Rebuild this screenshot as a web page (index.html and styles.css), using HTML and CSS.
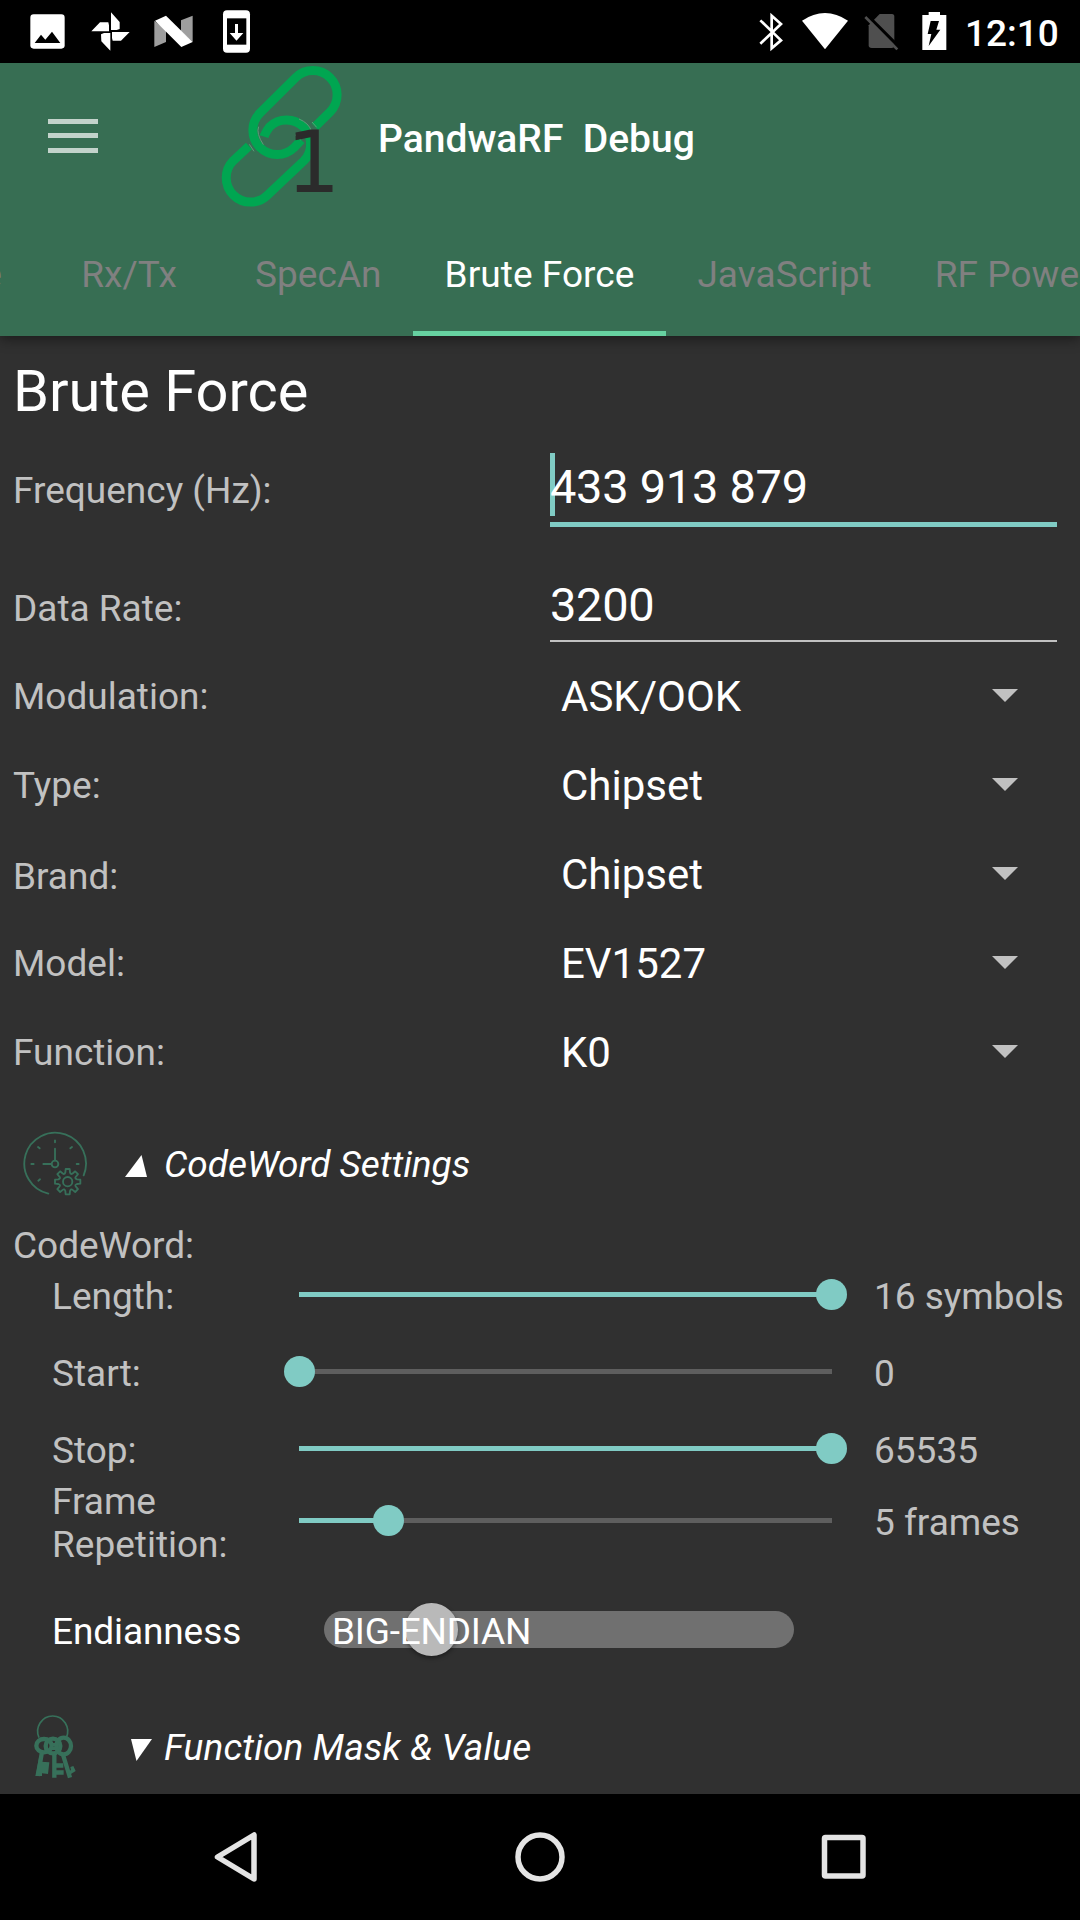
FILE: index.html
```html
<!DOCTYPE html>
<html lang="en">
<head>
<meta charset="utf-8">
<title>PandwaRF Debug</title>
<link rel="stylesheet" href="styles.css">
</head>
<body>
<div class="screen">
  <div class="status-bar">
    <div class="status-left">
      <svg class="notif" viewBox="48 0 189 189"><rect x="91" y="43" width="103" height="103" rx="10" fill="#fff"/><path d="M104 129L123 104L136 119L156 95L181 129Z"/></svg>
      <svg class="notif" viewBox="237 0 189 189"><path fill="#fff" d="M333 37L359 66V87L350 90H333ZM274 94L300 67H325L327 76V94ZM389 96L363 122H338L336 114V96ZM331 152L304 124L303 103L312 99H331Z"/></svg>
      <svg class="notif" viewBox="426 0 189 189"><path fill="#9e9e9e" d="M463 62V141L498 126V90ZM578 47L543 61V94L578 126Z"/><path fill="#fff" d="M465 62L498 47L578 126L544 141Z"/></svg>
      <svg class="notif" viewBox="615 0 189 189"><rect x="669" y="31" width="81" height="127" rx="12" fill="#fff"/><path d="M681 55H739V134H681Z"/><path fill="#fff" d="M705 72H714V99H730L709.500 122L689 99H705Z"/></svg>
    </div>
    <div class="status-right">
      <svg class="sys" viewBox="71 0 163 189"><path fill="none" stroke="#fff" stroke-width="8" d="M120 61L182 121L154 145V47L182 72L120 131"/></svg>
      <svg class="sys" viewBox="234 0 163 189"><path fill="#fff" d="M246 62Q315 16 384 62L315 148Z"/></svg>
      <svg class="sys" viewBox="397 0 163 189"><path fill="#4f4f4f" d="M480 42H517Q524 42 524 50V136Q524 144 516 144H456Q447 144 447 136V76Z"/><path stroke="#000" stroke-width="10" d="M440 43L540 143"/><path stroke="#4f4f4f" stroke-width="8" d="M437 51L533 148"/></svg>
      <svg class="sys" viewBox="560 0 163 189"><path fill="#fff" d="M606 45H625V36H659V45H678V150H606Z"/><path d="M631 63H656L648 89H660L625 138L633 102H622Z"/></svg>
      <span class="clock">12:10</span>
    </div>
  </div>

  <header class="app-bar">
    <div class="toolbar">
      <div class="menu"><i></i><i></i><i></i></div>
      <svg class="link" viewBox="660 189 378 441">
        <g fill="none" stroke="#00a651" stroke-width="27">
          <path d="M945 380L990 336A72.500 72.500 0 0 0 887 233L780 339A72.500 72.500 0 0 0 883 442L904 420"/>
          <path d="M792 410Q796 397 809 380A72.500 72.500 0 0 1 912 482L803 585A72.500 72.500 0 0 1 700 482L747 438"/>
        </g>
        <g fill="none" stroke="#5f9a78" stroke-width="3">
          <path d="M776 380Q768 400 790 434M897 357Q926 369 934 392M748 433L762 454M936 366L950 382M886 405L902 420"/>
        </g>
        <text class="link-num" x="859" y="575">1</text>
      </svg>
      <h1 class="app-title">PandwaRF  Debug</h1>
    </div>
    <nav class="tabs">
      <span class="tab tab-cut">e</span>
      <span class="tab">Rx/Tx</span>
      <span class="tab">SpecAn</span>
      <span class="tab active">Brute Force</span>
      <span class="tab">JavaScript</span>
      <span class="tab">RF Power</span>
    </nav>
  </header>

  <main class="content">
    <h2 class="page-title">Brute Force</h2>
    <div class="row row-freq"><span class="label">Frequency (Hz):</span><div class="field focused">433 913 879<i class="caret"></i></div></div>
    <div class="row row-rate"><span class="label">Data Rate:</span><div class="field">3200</div></div>
    <div class="row"><span class="label">Modulation:</span><div class="spinner">ASK/OOK<svg class="arrow" viewBox="0 0 26 13"><path d="M0 0H26L13 13Z"/></svg></div></div>
    <div class="row"><span class="label">Type:</span><div class="spinner">Chipset<svg class="arrow" viewBox="0 0 26 13"><path d="M0 0H26L13 13Z"/></svg></div></div>
    <div class="row"><span class="label label-low">Brand:</span><div class="spinner">Chipset<svg class="arrow" viewBox="0 0 26 13"><path d="M0 0H26L13 13Z"/></svg></div></div>
    <div class="row"><span class="label">Model:</span><div class="spinner">EV1527<svg class="arrow" viewBox="0 0 26 13"><path d="M0 0H26L13 13Z"/></svg></div></div>
    <div class="row"><span class="label">Function:</span><div class="spinner">K0<svg class="arrow" viewBox="0 0 26 13"><path d="M0 0H26L13 13Z"/></svg></div></div>

    <div class="section">
      <svg class="section-icon" viewBox="60 57 210 201">
        <g fill="none" stroke="#37705a" stroke-width="5.500" stroke-linecap="round" stroke-linejoin="round">
          <path d="M251 193A92.500 92.500 0 1 0 145 248"/>
          <circle cx="165" cy="159" r="10"/>
          <path d="M165 148V113M154 159H130M165 88V94M94 159H101M230 159H236M114 108L119 112M216 108L211 112M115 209L120 205"/>
          <g transform="translate(203 212)">
            <circle r="14"/>
            <path d="M28 -7L38 -6V6L28 7Q20 10 24.700 14.800L31 22.600L22.600 31L14.800 24.700Q10 20 7 28L6 38H-6L-7 28Q-10 20 -14.800 24.700L-22.600 31L-31 22.600L-24.700 14.800Q-20 10 -28 7L-38 6V-6L-28 -7Q-20 -10 -24.700 -14.800L-31 -22.600L-22.600 -31L-14.800 -24.700Q-10 -20 -7 -28L-6 -38H6L7 -28Q10 -20 14.800 -24.700L22.600 -31L31 -22.600L24.700 -14.800Q20 -10 28 -7Z"/>
          </g>
        </g>
      </svg>
      <svg class="tri tri-up" viewBox="0 0 22 22"><path d="M0 22H22L16.500 0Z"/></svg>
      <span class="section-name">CodeWord Settings</span>
    </div>

    <div class="sub-title">CodeWord:</div>
    <div class="slide-row"><span>Length:</span><div class="slider"><div class="fill" style="width:100%"></div></div><span class="value">16 symbols</span></div>
    <div class="slide-row"><span>Start:</span><div class="slider"><div class="fill" style="width:0%"></div></div><span class="value">0</span></div>
    <div class="slide-row"><span>Stop:</span><div class="slider"><div class="fill" style="width:100%"></div></div><span class="value">65535</span></div>
    <div class="slide-row slide-frame"><span>Frame<br>Repetition:</span><div class="slider"><div class="fill" style="width:16.8%"></div></div><span class="value">5 frames</span></div>
    <div class="endian-row"><span>Endianness</span><div class="switch"><i class="knob"></i><span class="switch-text">BIG-ENDIAN</span></div></div>

    <div class="section section-last">
      <svg class="section-icon" viewBox="0 36 210 201">
        <g fill="none" stroke="#37705a">
          <path stroke-width="5" d="M57 110A45 46 0 1 1 139 110"/>
          <g stroke-width="13">
            <ellipse cx="72" cy="134" rx="23" ry="20"/>
            <circle cx="99" cy="135" r="22"/>
            <ellipse cx="131" cy="135" rx="22" ry="25"/>
            <path d="M66 152L54 225M103 158V230M128 158L150 230" />
          </g>
          <path stroke-width="10" d="M90 131H111M93 142H108"/>
        </g>
        <path fill="#37705a" d="M62 182L88 184L84 219L66 217V225H46L58 165ZM108 187H130V200H108ZM108 208H131V221H108ZM144 212L153 207L151 198L160 195L167 210L148 222Z"/>
      </svg>
      <svg class="tri tri-down" viewBox="0 0 21 22"><path d="M0 0H21L5.500 22Z"/></svg>
      <span class="section-name">Function Mask &amp; Value</span>
    </div>
  </main>

  <footer class="nav-bar">
    <svg viewBox="0 0 60 60"><path d="M48 8V52L11.500 30Z"/></svg>
    <svg viewBox="0 0 60 60"><circle cx="30" cy="30" r="22"/></svg>
    <svg viewBox="0 0 60 60"><rect x="10.500" y="10.500" width="38.500" height="38.500" rx="1"/></svg>
  </footer>
</div>
</body>
</html>
```
FILE: styles.css
```css
* { box-sizing: border-box; }
body { margin: 0; background: #303030; }
.screen {
  width: 1080px;
  height: 1920px;
  display: flex;
  flex-direction: column;
  overflow: hidden;
  font-family: Roboto, sans-serif;
  font-size: 37px;
  color: #fff;
}
svg { display: block; flex: none; }
h1, h2 { margin: 0; font-weight: 400; }

.status-bar {
  height: 63px;
  flex: none;
  background: #000;
  display: flex;
  justify-content: space-between;
  padding: 0 21px 0 16px;
}
.status-left, .status-right { display: flex; }
.notif { width: 63px; height: 63px; }
.sys { width: 54.33px; height: 63px; }
.clock { width: 98px; padding-left: 4px; line-height: 68px; font-weight: 500; white-space: nowrap; }

.app-bar {
  height: 273px;
  flex: none;
  background: #376e53;
  box-shadow: 0 3px 12px rgba(0, 0, 0, .45);
  z-index: 1;
}
.toolbar { height: 147px; display: flex; }
.menu { flex: none; width: 220px; padding: 56px 0 0 48px; display: flex; flex-direction: column; gap: 9.3px; }
.menu i { width: 50px; height: 5px; background: #c3d3cb; }
.link { width: 126px; height: 147px; }
.link-num { font-family: "DejaVu Sans", sans-serif; font-size: 255px; fill: #2b2b2b; }
.app-title { margin-left: 32px; line-height: 153px; font-size: 39px; font-weight: 500; white-space: pre; }

.tabs { height: 126px; display: flex; overflow: hidden; }
.tab {
  flex: none;
  min-width: 189px;
  padding: 0 31.5px;
  text-align: center;
  line-height: 130px;
  letter-spacing: .05px;
  color: #808080;
  white-space: nowrap;
}
.tab-cut { min-width: 0; width: 34.5px; padding: 0 32.500px 0 0; direction: rtl; overflow: hidden; }
.tab.active { color: #fff; border-bottom: 5px solid #66d1a0; }

.content { flex: 1; color: #c1c1c1; }
.page-title { height: 110px; line-height: 111px; padding-left: 13px; font-size: 57.75px; color: #fff; }
.row { height: 89px; display: grid; grid-template-columns: 550px 507px; grid-template-rows: 89px; }
.row-freq { height: 118px; }
.row-rate { height: 88px; }
.label { padding-left: 13px; line-height: 89px; }
.label-low { padding-top: 2px; }
.field {
  position: relative;
  height: 78px;
  line-height: 82px;
  border-bottom: 2px solid #c1c1c1;
  font-size: 47px;
  letter-spacing: -.3px;
  color: #fff;
}
.field.focused { height: 81px; border-bottom: 5px solid #80cbc4; }
.caret { position: absolute; left: 0; top: 7px; width: 5px; height: 63px; background: #80cbc4; z-index: -1; }
.spinner {
  display: flex;
  align-items: center;
  justify-content: space-between;
  padding: 0 39.5px 0 11px;
  line-height: 89px;
  font-size: 42px;
  color: #fff;
}
.arrow { width: 26px; height: 13px; fill: #c1c1c1; margin-bottom: 2px; }

.section { height: 135px; display: flex; align-items: center; color: #fff; font-style: italic; padding-left: 20px; letter-spacing: -.05px; }
.section-icon { width: 70px; height: 67px; margin-bottom: 3px; }
.tri { fill: #fff; }
.tri-up { width: 22px; height: 22px; margin: 3px 17px 0 35px; }
.tri-down { width: 21px; height: 22px; margin: 4px 12px 0 41px; }
.section-last { height: 87px; padding-bottom: 6px; letter-spacing: .12px; }

.sub-title { height: 26px; line-height: 27px; padding-left: 13px; }
.slide-row {
  height: 77px;
  display: grid;
  grid-template-columns: 247px 532.5px 1fr;
  grid-template-rows: 100%;
  align-items: center;
  padding-left: 52px;
  line-height: 43px;
}
.slide-frame { height: 67px; }
.slider { height: 5px; margin-bottom: 4px; background: #5e5e5e; }
.fill { position: relative; height: 5px; background: #80cbc4; }
.fill::after {
  content: "";
  position: absolute;
  right: -15.5px;
  top: -13px;
  width: 31px;
  height: 31px;
  border-radius: 50%;
  background: #80cbc4;
}
.value { padding-left: 42.5px; white-space: nowrap; }

.endian-row {
  height: 151px;
  display: grid;
  grid-template-columns: 272px 470px;
  align-items: center;
  padding-left: 52px;
  color: #fff;
  letter-spacing: -.1px;
}
.switch { position: relative; height: 37px; margin-bottom: 4px; border-radius: 18.5px; background: #707070; padding-left: 8px; line-height: 41px; letter-spacing: -.2px; }
.knob {
  position: absolute;
  left: 80.5px;
  top: -8px;
  width: 53px;
  height: 53px;
  border-radius: 50%;
  background: #b9b9b9;
  box-shadow: 0 2px 4px rgba(0, 0, 0, .4);
}
.switch-text { position: relative; }

.nav-bar { height: 126px; flex: none; background: #000; display: flex; justify-content: center; gap: 244px; align-items: center; }
.nav-bar svg { width: 60px; height: 60px; fill: none; stroke: #e4e4e4; stroke-width: 5.5; stroke-linejoin: round; }
```
